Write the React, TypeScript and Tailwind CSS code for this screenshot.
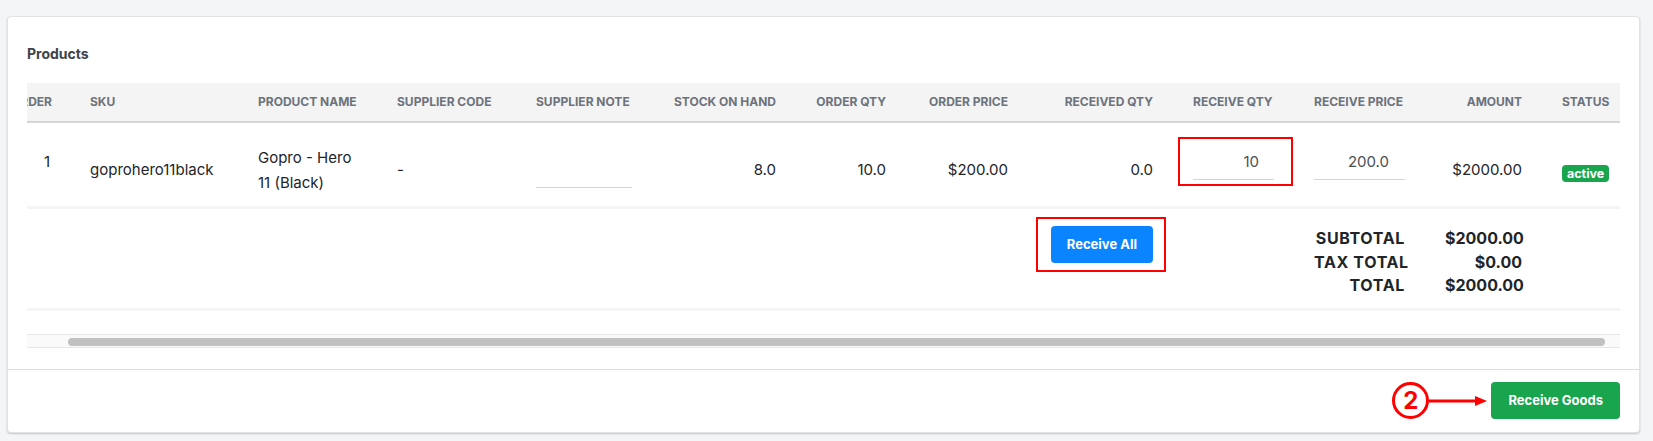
import React from "react";

const COLUMNS: { label: string; width: string; right?: boolean }[] = [
  { label: "Order", width: "w-[79px]" },
  { label: "SKU", width: "w-[168px]" },
  { label: "Product Name", width: "w-[139px]" },
  { label: "Supplier Code", width: "w-[139px]" },
  { label: "Supplier Note", width: "w-[136px]" },
  { label: "Stock on Hand", width: "w-[144px]", right: true },
  { label: "Order Qty", width: "w-[110px]", right: true },
  { label: "Order Price", width: "w-[122px]", right: true },
  { label: "Received Qty", width: "w-[145px]", right: true },
  { label: "Receive Qty", width: "w-[121px]" },
  { label: "Receive Price", width: "w-[131px]" },
  { label: "Amount", width: "w-[117px]", right: true },
  { label: "Status", width: "w-[89px]" },
];

const TOTALS = [
  { label: "SUBTOTAL", value: "$2000.00" },
  { label: "TAX TOTAL", value: "$0.00" },
  { label: "TOTAL", value: "$2000.00" },
];

const td = "px-5 align-top border-b-[3px] border-[#f5f5f5]";

const App = () => {
  return (
    <div className="min-h-screen bg-[#f4f5f7] pt-4 pl-[7px] pr-[13px] font-['Inter',sans-serif] text-[#212529]">
      <div className="rounded border border-[#e2e2e2] bg-white shadow-[0_1px_2px_rgba(0,0,0,0.2)]">
        <div className="px-[19px] pt-[27px] pb-[21px]">
          <h2 className="text-[14px] font-bold leading-5 text-[#3d434a]">Products</h2>

          <div className="mt-[19px] overflow-hidden">
            <table className="ml-[-36px] w-[1640px] table-fixed border-separate border-spacing-0 text-[15px]">
              <colgroup>
                {COLUMNS.map((c) => <col key={c.label} className={c.width} />)}
              </colgroup>
              <thead>
                <tr>
                  {COLUMNS.map((c) => (
                    <th
                      key={c.label}
                      className={`h-[40px] whitespace-nowrap border-b-2 border-[#d6d6d6] bg-[#f4f4f4] px-5 text-[12px] font-bold uppercase text-[#6c737c] ${c.right ? "text-right" : "text-left"}`}
                    >
                      {c.label}
                    </th>
                  ))}
                </tr>
              </thead>
              <tbody>
                <tr className="h-[86px]">
                  <td className={`${td} pt-[27px] text-right leading-6`}>1</td>
                  <td className={`${td} pt-[35px] leading-6 whitespace-nowrap`}>goprohero11black</td>
                  <td className={`${td} pt-[22px] leading-[25px]`}>Gopro - Hero 11 (Black)</td>
                  <td className={`${td} pt-[35px] leading-6`}>-</td>
                  <td className={`${td} pt-[28px]`}>
                    <input className="h-[37px] w-full border-b border-[#d0d4d9] bg-transparent outline-none" />
                  </td>
                  <td className={`${td} pt-[35px] text-right leading-6`}>8.0</td>
                  <td className={`${td} pt-[35px] text-right leading-6`}>10.0</td>
                  <td className={`${td} pt-[35px] text-right leading-6`}>$200.00</td>
                  <td className={`${td} pt-[35px] text-right leading-6`}>0.0</td>
                  <td className={`${td} pt-[20px]`}>
                    <div className="relative">
                      <input
                        defaultValue="10"
                        className="h-[37px] w-full border-b border-[#d0d4d9] bg-transparent pr-[15px] text-right text-[15px] text-[#4a4f55] outline-none"
                      />
                      <span className="pointer-events-none absolute -left-[15px] -right-[19px] -top-[6px] -bottom-[6px] border-2 border-[#ff0000]" />
                    </div>
                  </td>
                  <td className={`${td} pt-[20px]`}>
                    <input
                      defaultValue="200.0"
                      className="h-[37px] w-full border-b border-[#d0d4d9] bg-transparent pr-4 text-right text-[15px] text-[#4a4f55] outline-none"
                    />
                  </td>
                  <td className={`${td} pt-[35px] text-right leading-6`}>$2000.00</td>
                  <td className={`${td} pt-[39px]`}>
                    <span className="inline-block rounded bg-[#18a54e] px-[5px] text-[12.5px] font-bold leading-[17px] text-white">active</span>
                  </td>
                </tr>
                <tr className="h-[102px]">
                  <td className={td} colSpan={8} />
                  <td className={`${td} pt-[17px] text-right`}>
                    <div className="relative inline-block">
                      <button className="h-[37px] rounded bg-[#0a84ff] px-4 text-[13px] font-bold text-white">Receive All</button>
                      <span className="pointer-events-none absolute -left-[15px] -right-[13px] -top-[9px] -bottom-[9px] border-2 border-[#ff0000]" />
                    </div>
                  </td>
                  <td className={td} />
                  <td className={`${td} pt-[18px] text-right text-[16px] font-bold leading-[23.5px] tracking-[0.04em] whitespace-nowrap`}>
                    {TOTALS.map((t) => <div key={t.label}>{t.label}</div>)}
                  </td>
                  <td className={`${td} pt-[18px] text-right text-[16px] font-bold leading-[23.5px]`}>
                    {TOTALS.map((t) => <div key={t.label}>{t.value}</div>)}
                  </td>
                  <td className={td} />
                </tr>
              </tbody>
            </table>
          </div>

          <div className="mt-[23px] h-[14px] border-y border-[#e6e6e6] bg-[#fafafa] pt-[3px]">
            <div className="ml-[41px] mr-[15px] h-[8px] rounded-full bg-[#c1c1c1]" />
          </div>
        </div>

        <div className="flex items-center justify-end border-t border-[#dedede] px-[19px] pt-3 pb-[13px]">
          <div className="flex h-[37px] w-[37px] items-center justify-center rounded-full border-[3px] border-[#ff0000] text-[24px] font-bold leading-none text-[#ff0000]">
            2
          </div>
          <svg width="58" height="14" viewBox="0 0 58 14" className="mr-[4px]">
            <line x1="0" y1="7" x2="48" y2="7" stroke="#ff0000" strokeWidth="3" />
            <polygon points="46,2 58,7 46,12" fill="#ff0000" />
          </svg>
          <button className="h-[37px] rounded bg-[#18a54e] px-[17px] text-[13px] font-bold text-white">Receive Goods</button>
        </div>
      </div>
    </div>
  );
};

export default App;
